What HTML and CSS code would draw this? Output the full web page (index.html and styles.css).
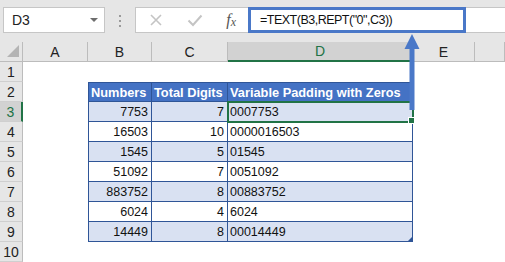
FILE: index.html
```html
<!DOCTYPE html>
<html>
<head>
  <meta charset="UTF-8">
  <meta name="viewport" content="width=device-width,initial-scale=1">
  <title>TEXT REPT padding</title>
  <link rel="stylesheet" href="styles.css">
</head>
<body>
  <div class="toolbar">
    <div class="namebox">
      <span>D3</span>
      <span class="dropdown"></span>
    </div>
    <div class="dots">
      <span></span><span></span><span></span>
    </div>
    <div class="fxbuttons">
      <svg width="14" height="14" viewBox="0 0 14 14"><path d="M2 2 L12 12 M12 2 L2 12" stroke="#c4c4c4" stroke-width="1.6" fill="none"/></svg>
      <svg width="16" height="14" viewBox="0 0 16 14"><path d="M1.5 7.5 L6 12 L14.5 2.5" stroke="#c4c4c4" stroke-width="2" fill="none"/></svg>
      <span class="fx">f<sub>x</sub></span>
    </div>
    <div class="formulabar">
      <div class="formula">=TEXT(B3,REPT("0",C3))</div>
    </div>
  </div>

  <div class="sheet">
    <!-- column headers -->
    <div class="corner"><span class="selectall"></span></div>
    <div class="colhead">A</div>
    <div class="colhead">B</div>
    <div class="colhead">C</div>
    <div class="colhead active">D</div>
    <div class="colhead">E</div>
    <div class="colhead"></div>

    <!-- 1 -->
    <div class="rowhead">1</div>
    <div class="cell"></div><div class="cell"></div><div class="cell"></div><div class="cell"></div><div class="cell"></div><div class="cell"></div>

    <!-- 2 -->
    <div class="rowhead">2</div>
    <div class="cell"></div>
    <div class="tcell thead first">Numbers</div>
    <div class="tcell thead">Total Digits</div>
    <div class="tcell thead">Variable Padding with Zeros</div>
    <div class="cell"></div><div class="cell"></div>

    <!-- 3 -->
    <div class="rowhead active">3</div>
    <div class="cell"></div>
    <div class="tcell band first num">7753</div>
    <div class="tcell band num">7</div>
    <div class="tcell band selected">0007753</div>
    <div class="cell"></div><div class="cell"></div>

    <!-- 4 -->
    <div class="rowhead">4</div>
    <div class="cell"></div>
    <div class="tcell first num">16503</div>
    <div class="tcell num">10</div>
    <div class="tcell">0000016503</div>
    <div class="cell"></div><div class="cell"></div>

    <!-- 5 -->
    <div class="rowhead">5</div>
    <div class="cell"></div>
    <div class="tcell band first num">1545</div>
    <div class="tcell band num">5</div>
    <div class="tcell band">01545</div>
    <div class="cell"></div><div class="cell"></div>

    <!-- 6 -->
    <div class="rowhead">6</div>
    <div class="cell"></div>
    <div class="tcell first num">51092</div>
    <div class="tcell num">7</div>
    <div class="tcell">0051092</div>
    <div class="cell"></div><div class="cell"></div>

    <!-- 7 -->
    <div class="rowhead">7</div>
    <div class="cell"></div>
    <div class="tcell band first num">883752</div>
    <div class="tcell band num">8</div>
    <div class="tcell band">00883752</div>
    <div class="cell"></div><div class="cell"></div>

    <!-- 8 -->
    <div class="rowhead">8</div>
    <div class="cell"></div>
    <div class="tcell first num">6024</div>
    <div class="tcell num">4</div>
    <div class="tcell">6024</div>
    <div class="cell"></div><div class="cell"></div>

    <!-- 9 -->
    <div class="rowhead">9</div>
    <div class="cell"></div>
    <div class="tcell band first num">14449</div>
    <div class="tcell band num">8</div>
    <div class="tcell band last">00014449</div>
    <div class="cell"></div><div class="cell"></div>

    <!-- 10 -->
    <div class="rowhead">10</div>
    <div class="cell"></div><div class="cell"></div><div class="cell"></div><div class="cell"></div><div class="cell"></div><div class="cell"></div>

    <!-- arrow from formula to D3 -->
    <svg class="arrow" width="16" height="76" viewBox="0 0 16 76">
      <path d="M8 0 L15.5 15 L10.5 15 L10.5 76 L5.5 76 L5.5 15 L0.5 15 Z" fill="#4a78c8"/>
    </svg>
  </div>
</body>
</html>
```

FILE: styles.css
```css
body {
  margin: 0;
  background: #ffffff;
  font-family: "Liberation Sans", Arial, sans-serif;
  overflow: hidden;
}

/* formula bar */

.toolbar {
  display: flex;
  align-items: flex-start;
  height: 42px;
  padding-top: 7px;
  box-sizing: border-box;
  background: #e6e6e6;
}

.namebox {
  display: flex;
  align-items: center;
  justify-content: space-between;
  width: 102px;
  height: 26px;
  margin-left: 3px;
  padding: 0 6px 0 8px;
  box-sizing: border-box;
  background: #ffffff;
  border: 1px solid #c6c6c6;
  font-size: 14px;
  color: #222222;
}

.dropdown {
  width: 0;
  height: 0;
  border-left: 4px solid transparent;
  border-right: 4px solid transparent;
  border-top: 4px solid #6d6d6d;
}

.dots {
  display: flex;
  flex-direction: column;
  gap: 3px;
  width: 30px;
  padding-top: 8px;
  align-items: center;
}

.dots span {
  width: 2px;
  height: 2px;
  background: #9a9a9a;
}

.fxbuttons {
  display: flex;
  align-items: center;
  justify-content: space-between;
  width: 113px;
  height: 26px;
  padding: 0 12px 0 13px;
  box-sizing: border-box;
  background: #ffffff;
  border: 1px solid #c6c6c6;
  border-right: none;
}

.fx {
  font-family: "Liberation Serif", "Times New Roman", serif;
  font-style: italic;
  font-size: 16px;
  color: #555555;
  line-height: 1;
}

.fx sub {
  font-size: 12px;
  vertical-align: -1px;
}

.formulabar {
  flex: 1;
  height: 26px;
  background: #ffffff;
  border-top: 1px solid #c6c6c6;
  border-bottom: 1px solid #c6c6c6;
  box-sizing: border-box;
}

.formula {
  width: 218px;
  height: 26px;
  margin-top: -1px;
  padding-left: 9px;
  box-sizing: border-box;
  border: 3px solid #4a78c8;
  font-size: 12.5px;
  letter-spacing: -0.5px;
  line-height: 20px;
  color: #111111;
}

/* sheet */

.sheet {
  position: relative;
  display: grid;
  grid-template-columns: 23px 65px 64px 76px 185px 62px 1fr;
  grid-auto-rows: 20px;
}

.corner {
  display: flex;
  align-items: flex-end;
  justify-content: flex-end;
  padding: 0 3px 4px 0;
  background: #e6e6e6;
  border-right: 1px solid #bcbcbc;
  border-bottom: 1px solid #bcbcbc;
}

.selectall {
  width: 0;
  height: 0;
  border-left: 12px solid transparent;
  border-bottom: 12px solid #b4b4b4;
}

.colhead {
  display: flex;
  align-items: center;
  justify-content: center;
  background: #e6e6e6;
  border-right: 1px solid #bcbcbc;
  border-bottom: 1px solid #bcbcbc;
  font-size: 14px;
  color: #222222;
}

.colhead.active {
  background: #d2d2d2;
  border-bottom: 2px solid #217346;
  color: #217346;
}

.rowhead {
  display: flex;
  align-items: center;
  justify-content: center;
  box-sizing: border-box;
  background: #e6e6e6;
  border-right: 1px solid #bcbcbc;
  border-bottom: 1px solid #cfcfcf;
  font-size: 14px;
  color: #222222;
}

.rowhead.active {
  background: #d2d2d2;
  border-right: 2px solid #217346;
  color: #217346;
}

.cell {
  background: #ffffff;
}

.tcell {
  display: flex;
  align-items: center;
  padding: 0 2px;
  box-sizing: border-box;
  border-right: 1px solid #2f5597;
  border-bottom: 1px solid #2f5597;
  background: #ffffff;
  font-family: "Liberation Sans", Arial, sans-serif;
  font-size: 12.5px;
  color: #111111;
  white-space: nowrap;
}

.tcell.first {
  border-left: 1px solid #2f5597;
}

.tcell.thead {
  border-top: 1px solid #2f5597;
  background: #4472c4;
  color: #ffffff;
  font-weight: bold;
  font-size: 12.8px;
}

.tcell.num {
  justify-content: flex-end;
  padding-right: 3px;
}

.tcell.band {
  background: #d9e1f2;
}

.tcell.selected {
  position: relative;
  outline: 2px solid #217346;
  outline-offset: -1px;
}

.tcell.selected::after {
  content: "";
  position: absolute;
  right: -3px;
  bottom: -3px;
  width: 5px;
  height: 5px;
  background: #217346;
  border: 1px solid #ffffff;
}

.tcell.last {
  position: relative;
}

.tcell.last::after {
  content: "";
  position: absolute;
  right: 0;
  bottom: 0;
  width: 0;
  height: 0;
  border-left: 4px solid transparent;
  border-bottom: 4px solid #2f5597;
}

.arrow {
  position: absolute;
  left: 404px;
  top: -8px;
}
```
